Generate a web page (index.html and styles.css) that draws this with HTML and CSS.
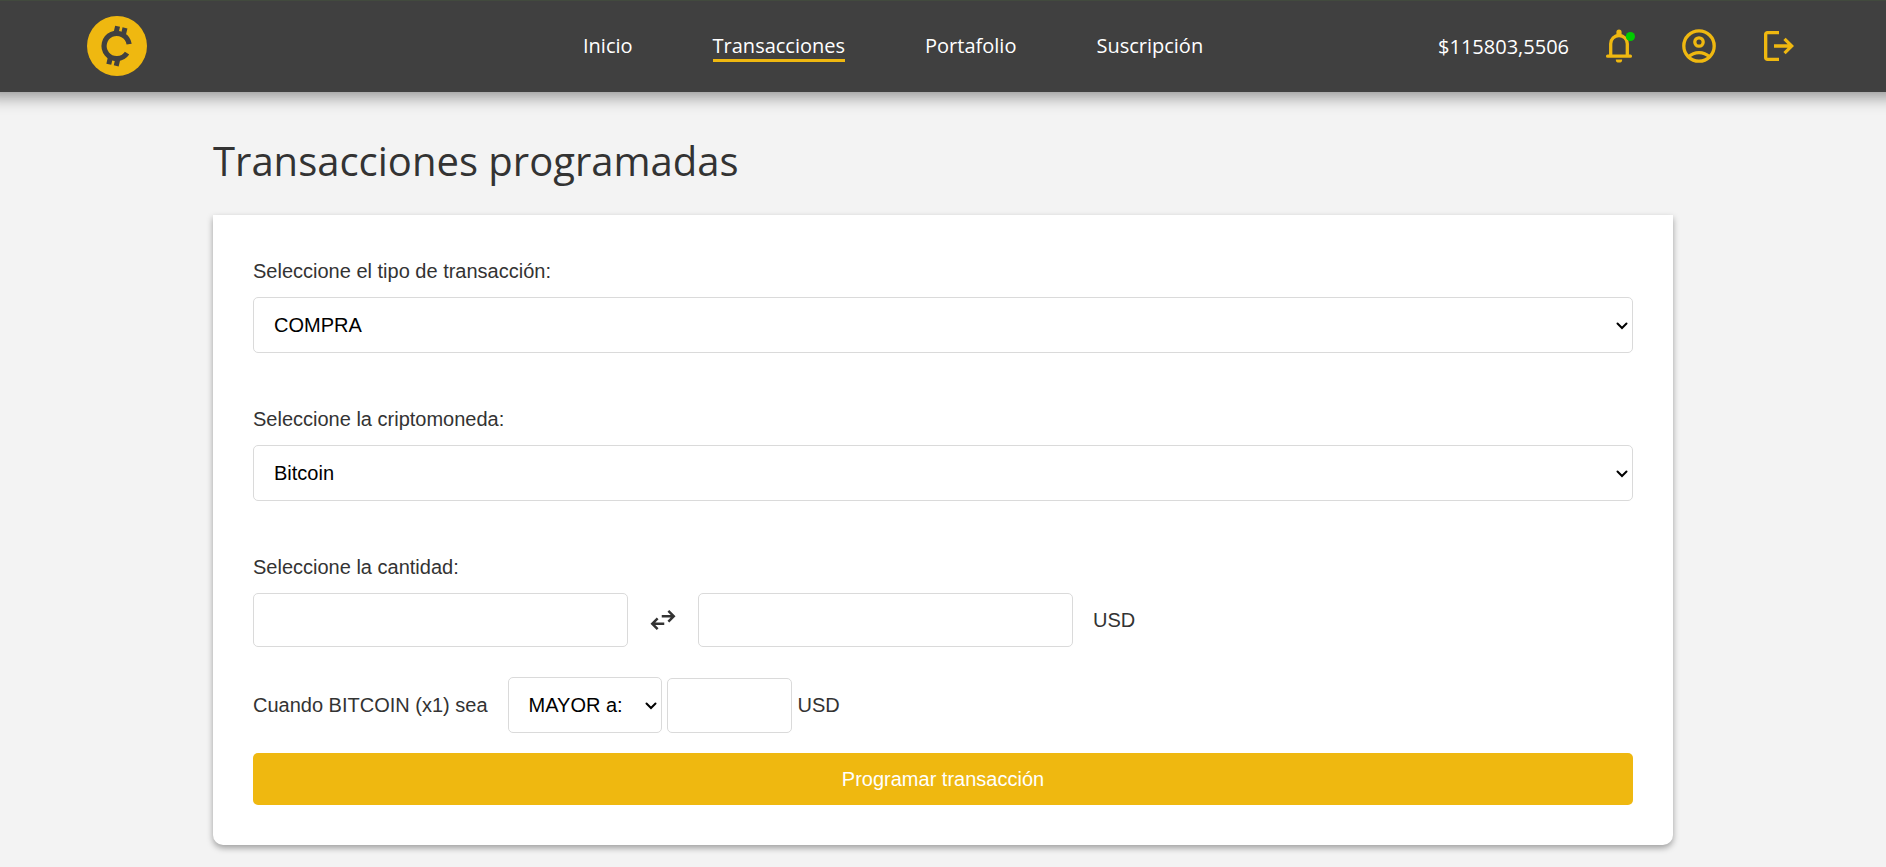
FILE: index.html
```html
<!DOCTYPE html>
<html lang="es">
<head>
<meta charset="utf-8">
<title>Transacciones programadas</title>
<link rel="stylesheet" href="styles.css">
</head>
<body>
<header class="header">
  <svg class="logo" viewBox="0 0 60 60">
    <circle cx="30" cy="30" r="30" fill="#efb810"/>
    <g transform="rotate(13 29.7 30)" fill="#404040">
      <path d="M41.4 25.4A12.6 12.6 0 1 0 41.4 34.6" fill="none" stroke="#404040" stroke-width="5.2"/>
      <path d="M23.6 10.5h5v7h-5zM31.2 10.5h5v7h-5zM23.6 42.5h5v7h-5zM31.2 42.5h5v7h-5z"/>
    </g>
  </svg>
  <nav class="nav">
    <a class="nav-link">Inicio</a>
    <a class="nav-link active">Transacciones</a>
    <a class="nav-link">Portafolio</a>
    <a class="nav-link">Suscripción</a>
  </nav>
  <div class="tools">
    <span class="balance">$115803,5506</span>
    <svg class="icon" viewBox="0 0 40 40">
      <path d="M8.6 30.2h22.8M11.7 30V17.8a8.3 8.3 0 0 1 16.6 0V30" fill="none" stroke="#efb810" stroke-width="3.3" stroke-linecap="round"/>
      <path d="M17.4 10V6a2.6 2.6 0 0 1 5.2 0v4zM16.8 33.4h6.4a3.2 3.2 0 0 1-6.4 0z" fill="#efb810"/>
      <circle cx="31.4" cy="10.5" r="4.6" fill="#00cc00"/>
    </svg>
    <svg class="icon" viewBox="0 0 40 40" fill="none" stroke="#efb810" stroke-width="3.3">
      <circle cx="20" cy="20" r="15.2"/>
      <circle cx="20" cy="16" r="4.2"/>
      <path d="M9.3 31q4.7-4.3 10.7-4.3T30.7 31"/>
    </svg>
    <svg class="icon" viewBox="0 -960 960 960" fill="#efb810">
      <path d="M200-120q-33 0-56.5-23.5T120-200v-560q0-33 23.5-56.5T200-840h280v80H200v560h280v80H200Zm440-160-55-58 102-102H360v-80h327L585-622l55-58 200 200-200 200Z"/>
    </svg>
  </div>
</header>
<main class="main">
  <h1 class="title">Transacciones programadas</h1>
  <form class="card">
    <div class="group">
      <label class="label">Seleccione el tipo de transacción:</label>
      <div class="picker">
        <select class="control select"><option>COMPRA</option></select>
        <svg class="chevron" viewBox="0 0 12 8"><path d="M1.5 1.5 6 6l4.5-4.5"/></svg>
      </div>
    </div>
    <div class="group">
      <label class="label">Seleccione la criptomoneda:</label>
      <div class="picker">
        <select class="control select"><option>Bitcoin</option></select>
        <svg class="chevron" viewBox="0 0 12 8"><path d="M1.5 1.5 6 6l4.5-4.5"/></svg>
      </div>
    </div>
    <label class="label">Seleccione la cantidad:</label>
    <div class="amount">
      <input class="control amount-input" type="text">
      <svg class="swap" viewBox="0 -960 960 960" fill="#333">
        <path d="M280-160 80-360l200-200 56 57-103 103h287v80H233l103 103-56 57Zm400-240-56-57 103-103H440v-80h287L624-743l56-57 200 200-200 200Z"/>
      </svg>
      <input class="control amount-input" type="text">
      <span class="unit">USD</span>
    </div>
    <div class="condition">
      <span>Cuando BITCOIN (x1) sea</span>
      <div class="picker compare">
        <select class="control select"><option>MAYOR a:</option></select>
        <svg class="chevron" viewBox="0 0 12 8"><path d="M1.5 1.5 6 6l4.5-4.5"/></svg>
      </div>
      <input class="control price" type="text">
      <span class="price-unit">USD</span>
    </div>
    <button class="submit" type="button">Programar transacción</button>
  </form>
</main>
</body>
</html>
```
FILE: styles.css
```css
* {
  box-sizing: border-box;
}

body {
  margin: 0;
  min-height: 867px;
  background: #f3f3f3;
  color: #333;
  font: 20px/23px "Liberation Sans", Arial, sans-serif;
}

.header {
  display: flex;
  align-items: center;
  height: 92px;
  padding: 0 87px;
  background: #404040;
  color: #fff;
  font-family: "Open Sans", sans-serif;
  box-shadow: inset 0 1px #424a3e, 0 -10px 15px 15px rgba(0, 0, 0, 0.4);
}

.logo {
  width: 60px;
  height: 60px;
}

.nav {
  display: flex;
  gap: 80px;
  margin-left: 436px;
}

.nav-link {
  height: 32px;
  line-height: 32px;
  border-bottom: 3px solid transparent;
}

.nav-link.active {
  border-color: #efb810;
}

.tools {
  display: flex;
  align-items: center;
  gap: 40px;
  margin-left: auto;
}

.balance {
  margin-right: -10px;
}

.icon {
  width: 40px;
  height: 40px;
}

.main {
  width: 1460px;
  margin: 0 auto;
  padding-top: 41px;
}

.title {
  margin: 0 0 27px;
  font: 400 40px/55px "Open Sans", sans-serif;
}

.card {
  height: 630px;
  padding: 40px;
  border-radius: 0 0 10px 10px;
  background: #fff;
  box-shadow: 0 3px 6px rgba(0, 0, 0, 0.35);
}

.group {
  margin-bottom: 50px;
}

.label {
  display: block;
  height: 42px;
  line-height: 32px;
}

.control {
  display: block;
  height: 54px;
  margin: 0;
  padding: 0 20px;
  border: 1px solid #dadada;
  border-radius: 5px;
  background: #fff;
  color: #000;
  font: inherit;
}

.picker {
  position: relative;
}

.select {
  width: 100%;
  height: 56px;
  appearance: none;
}

.chevron {
  position: absolute;
  top: 25px;
  right: 5px;
  width: 12px;
  height: 8px;
  fill: none;
  stroke: #000;
  stroke-width: 2;
  stroke-linecap: round;
  pointer-events: none;
}

.amount {
  display: flex;
  align-items: center;
}

.amount-input {
  width: 375px;
}

.swap {
  width: 30px;
  height: 30px;
  margin: 0 20px;
}

.unit {
  margin-left: 20px;
}

.condition {
  display: flex;
  align-items: center;
  margin: 30px 0 20px;
}

.compare {
  width: 154px;
  margin: 0 5px 0 20px;
}

.price {
  width: 125px;
  height: 55px;
  margin-top: 1px;
}

.price-unit {
  margin-left: 6px;
}

.submit {
  display: block;
  width: 100%;
  height: 52px;
  padding: 0;
  border: 0;
  border-radius: 5px;
  background: #efb810;
  color: #fff;
  font: inherit;
}
```
